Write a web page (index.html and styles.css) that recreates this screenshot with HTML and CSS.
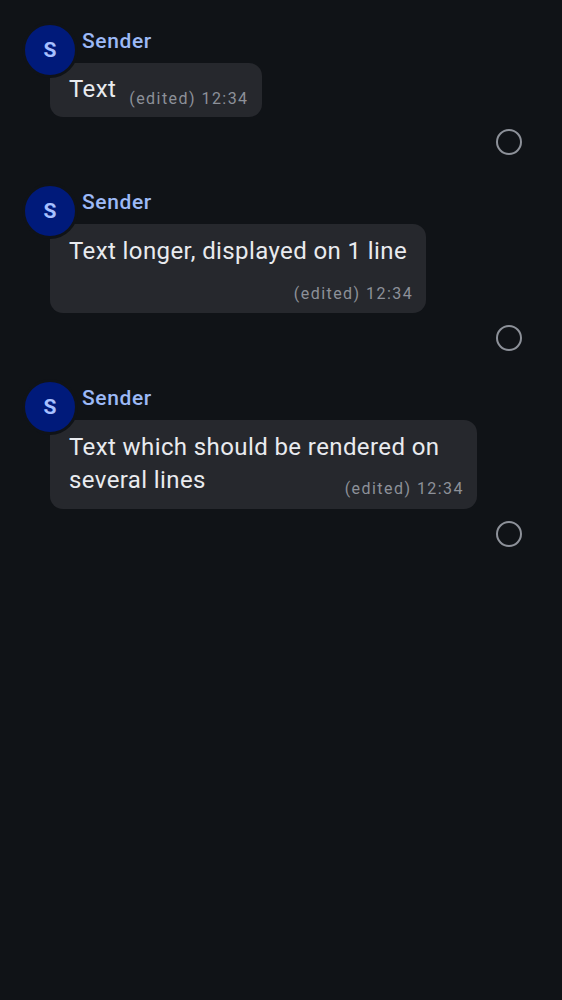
FILE: index.html
```html
<!DOCTYPE html>
<html lang="en">
<head>
<meta charset="utf-8">
<title>Timeline</title>
<link rel="stylesheet" href="styles.css">
</head>
<body>
<div class="timeline">
  <div class="msg">
    <div class="avatar">S</div>
    <div class="sender">Sender</div>
    <div class="bubble inline">
      <span class="text">Text</span>
      <span class="meta">(edited) 12:34</span>
    </div>
    <div class="status"><svg width="26" height="26" viewBox="0 0 26 26"><circle cx="13" cy="13" r="12" fill="none" stroke="#8d9199" stroke-width="2"/></svg></div>
  </div>

  <div class="msg">
    <div class="avatar">S</div>
    <div class="sender">Sender</div>
    <div class="bubble below">
      <div class="text">Text longer, displayed on 1 line</div>
      <div class="meta">(edited) 12:34</div>
    </div>
    <div class="status"><svg width="26" height="26" viewBox="0 0 26 26"><circle cx="13" cy="13" r="12" fill="none" stroke="#8d9199" stroke-width="2"/></svg></div>
  </div>

  <div class="msg">
    <div class="avatar">S</div>
    <div class="sender">Sender</div>
    <div class="bubble wrap"><span class="text">Text which should be rendered on several lines</span><span class="meta">(edited) 12:34</span></div>
    <div class="status"><svg width="26" height="26" viewBox="0 0 26 26"><circle cx="13" cy="13" r="12" fill="none" stroke="#8d9199" stroke-width="2"/></svg></div>
  </div>
</div>
</body>
</html>
```
FILE: styles.css
```css
html, body {
  margin: 0;
  padding: 0;
  background: #101317;
}
body {
  width: 562px;
  height: 1000px;
  font-family: Roboto, "Noto Sans", sans-serif;
  color: #e9ebef;
}
.timeline {
  display: flex;
  flex-direction: column;
}
.msg {
  position: relative;
  padding: 29px 0 0 50px;
  margin-bottom: 6px;
}
.avatar {
  position: absolute;
  left: 22px;
  top: 22px;
  width: 50px;
  height: 50px;
  border: 3px solid #101317;
  border-radius: 50%;
  background: #001a7a;
  color: #a7c0ff;
  font-weight: 700;
  font-size: 21px;
  display: flex;
  align-items: center;
  justify-content: center;
  z-index: 1;
}
.sender {
  margin-left: 32px;
  font-size: 21px;
  line-height: 24px;
  font-weight: 500;
  letter-spacing: 0.6px;
  color: #9cb9f6;
  margin-bottom: 10px;
}
.bubble {
  width: fit-content;
  max-width: 427px;
  box-sizing: border-box;
  background: #26282d;
  border-radius: 13px;
  padding: 11px 13px 9px 19px;
}
.text {
  margin: 0;
  font-size: 24px;
  line-height: 33px;
  letter-spacing: 0.4px;
}
.meta {
  font-size: 16px;
  line-height: 20px;
  color: #8d9199;
  letter-spacing: 1.45px;
}
.bubble.inline {
  display: flex;
  align-items: flex-end;
  gap: 13px;
  padding-top: 10px;
  padding-bottom: 11px;
}
.bubble.inline .meta {
  margin-bottom: -3px;
}
.bubble.below .text {
  padding-right: 6px;
}
.bubble.below .meta {
  text-align: right;
  margin-top: 16px;
}
.bubble.wrap {
  width: 427px;
  display: flow-root;
  font-size: 24px;
  line-height: 33px;
  padding-bottom: 10px;
}
.bubble.wrap .meta {
  float: right;
  margin-top: 15px;
}
.status {
  display: flex;
  justify-content: flex-end;
  padding-right: 40px;
  margin-top: 12px;
}
.status svg {
  display: block;
}
```
